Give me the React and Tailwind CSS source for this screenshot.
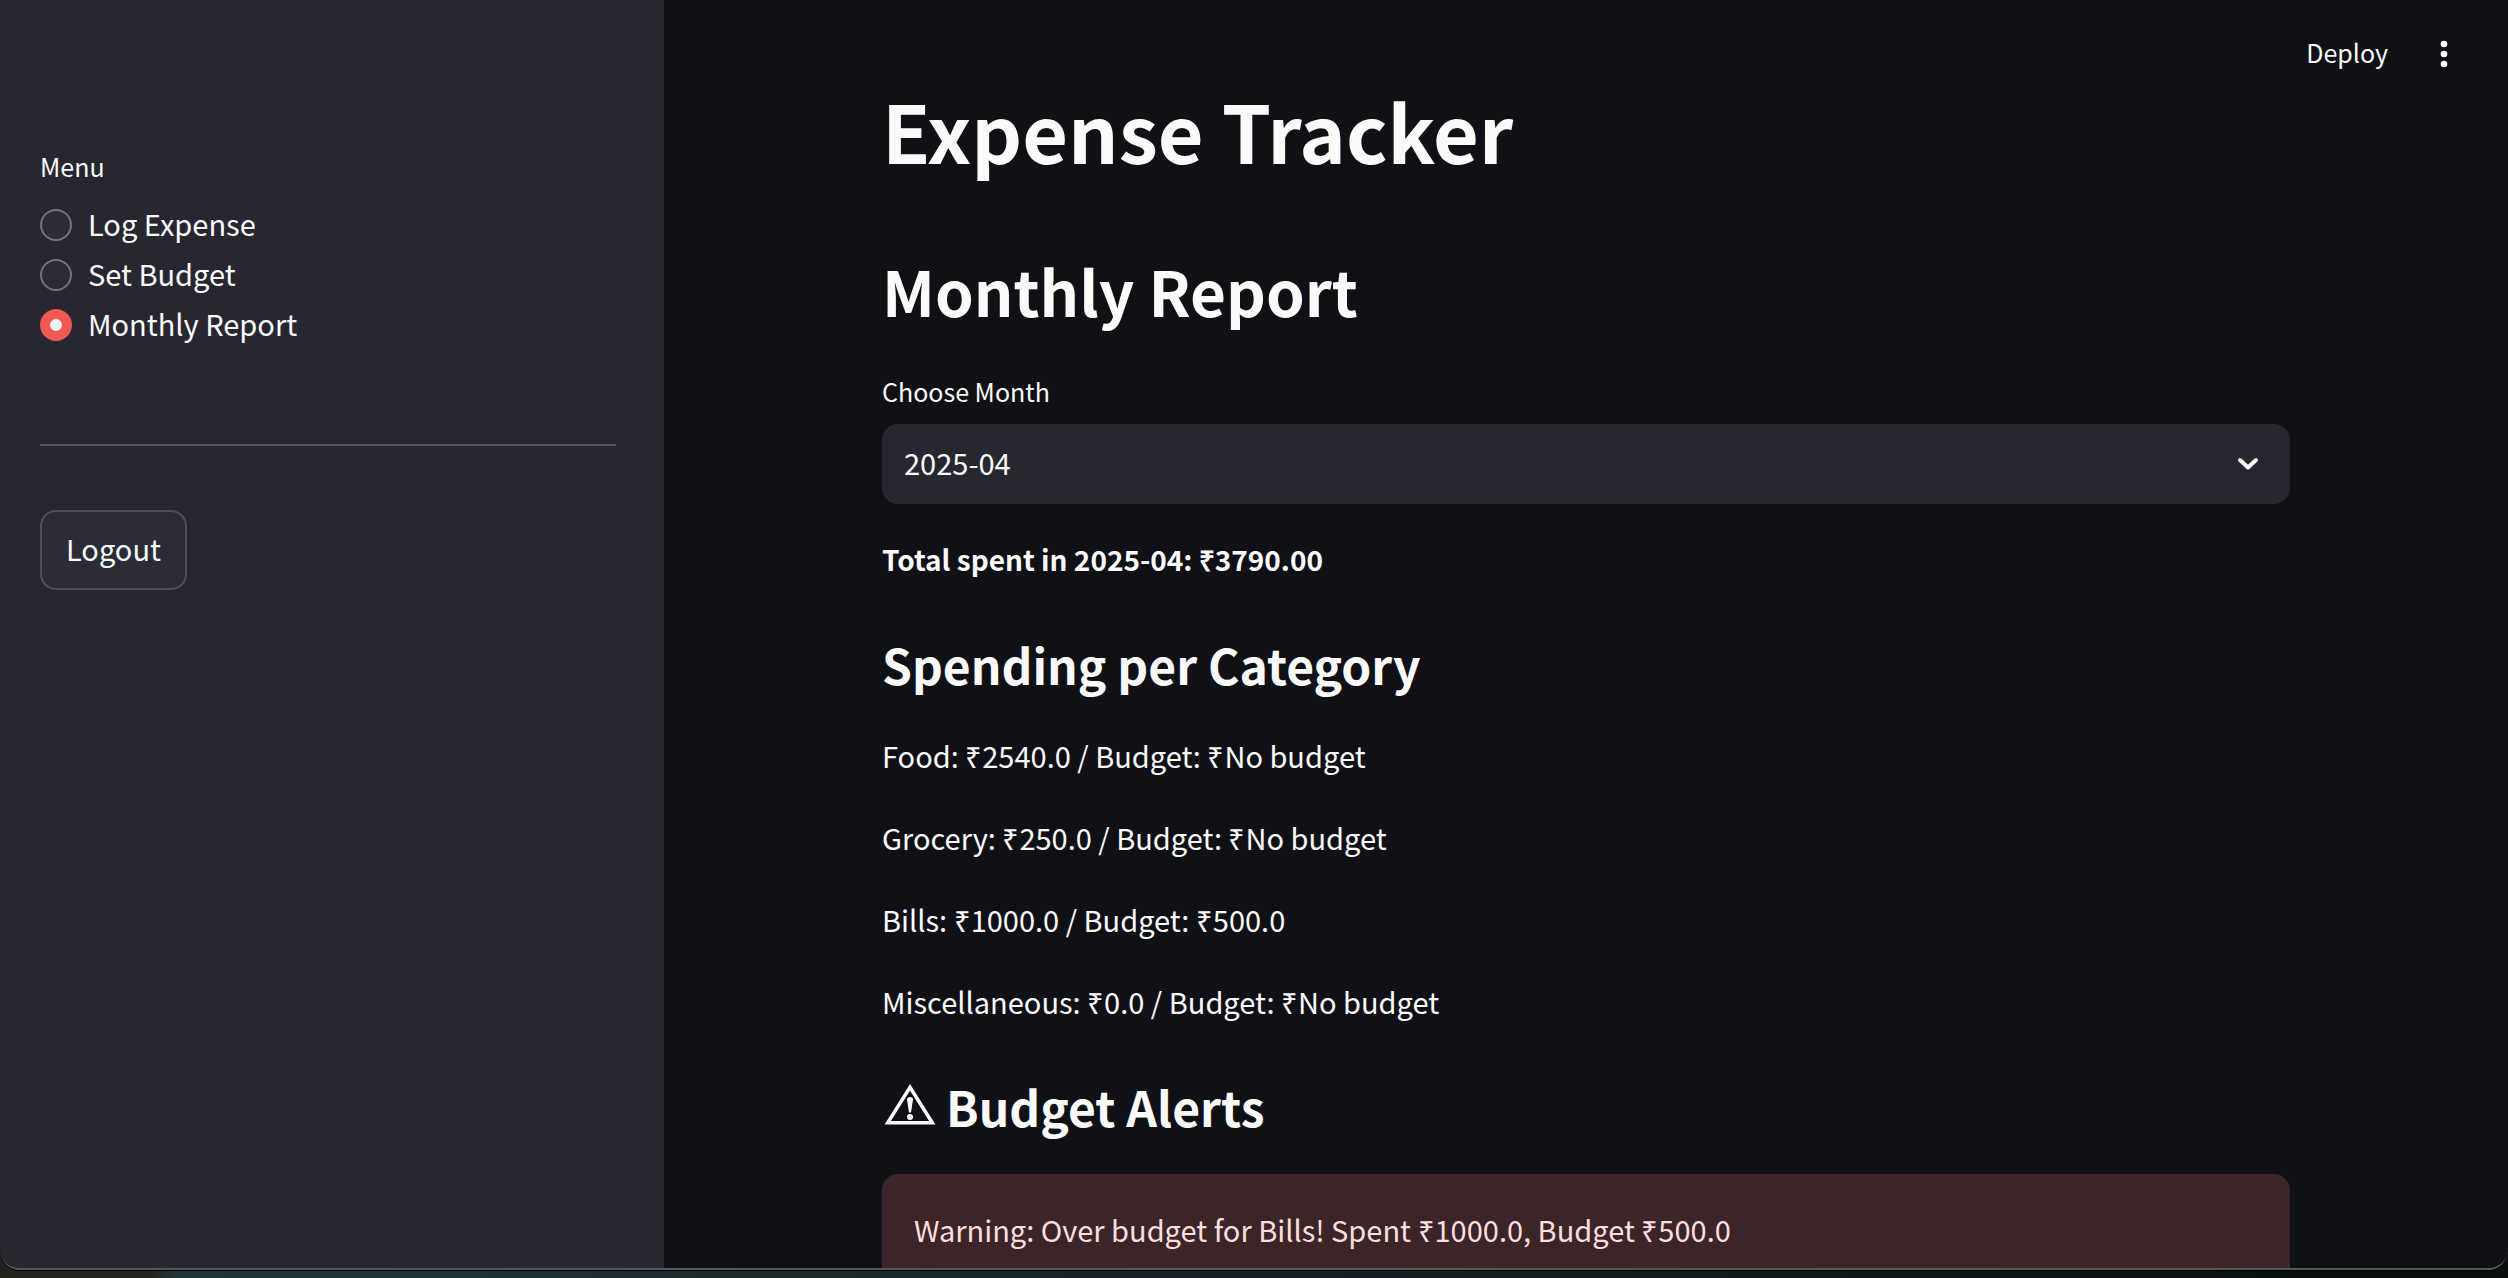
import { useState } from 'react';

const menuItems = ['Log Expense', 'Set Budget', 'Monthly Report'];

const categories = [
  { name: 'Food', spent: '2540.0', budget: 'No budget' },
  { name: 'Grocery', spent: '250.0', budget: 'No budget' },
  { name: 'Bills', spent: '1000.0', budget: '500.0' },
  { name: 'Miscellaneous', spent: '0.0', budget: 'No budget' },
];

function Sidebar() {
  const [selected, setSelected] = useState('Monthly Report');
  return (
    <aside className="w-[664px] shrink-0 bg-[#262730] pl-10 pr-12 pt-[146px]">
      <fieldset>
        <legend className="text-[25px] leading-10">Menu</legend>
        <div className="mt-[14px] flex flex-col">
          {menuItems.map((item) => (
            <label key={item} className="flex h-[50px] items-center gap-4">
              <input
                type="radio"
                name="menu"
                value={item}
                checked={selected === item}
                onChange={() => setSelected(item)}
                className="size-8 appearance-none rounded-full border-2 border-[#73747a] bg-[#2b2c36] checked:border-10 checked:border-[#ee5a53] checked:bg-[#f0f2f6]"
              />
              <span className="pb-1">{item}</span>
            </label>
          ))}
        </div>
      </fieldset>
      <hr className="mt-[94px] border-0 border-t-2 border-[#53545c]" />
      <button
        type="button"
        className="mt-16 h-20 rounded-2xl border-2 border-[#4f5059] bg-[#2b2c36] px-6 pb-1"
      >
        Logout
      </button>
    </aside>
  );
}

function Toolbar() {
  return (
    <header className="absolute top-0 right-0 flex items-center gap-9 pt-[34px] pr-11">
      <button type="button" className="pb-1 text-[25px] leading-9">
        Deploy
      </button>
      <button type="button" aria-label="Main menu">
        <svg width="40" height="40" viewBox="0 0 40 40" fill="currentColor">
          <circle cx="20" cy="10" r="3.3" />
          <circle cx="20" cy="20" r="3.3" />
          <circle cx="20" cy="30" r="3.3" />
        </svg>
      </button>
    </header>
  );
}

function WarningIcon() {
  return (
    <svg width="56" height="44" viewBox="0 0 56 44" fill="none" className="shrink-0">
      <path d="M28 3.3 L50.3 38.8 H5.7 Z" stroke="currentColor" strokeWidth="3.5" />
      <path d="M25 15.5 Q25 13 28 13 Q31 13 31 15.5 L29 28.5 H27 Z" fill="currentColor" />
      <circle cx="28" cy="33" r="3" fill="currentColor" />
    </svg>
  );
}

function Report() {
  return (
    <div className="mx-auto max-w-[1408px] pt-[77px]">
      <h1 className="text-[79px] leading-[106px] font-bold">Expense Tracker</h1>
      <h2 className="mt-16 text-[62px] leading-[86px] font-bold">Monthly Report</h2>

      <label htmlFor="month" className="mt-[38px] block text-[25px] leading-10">
        Choose Month
      </label>
      <div className="relative mt-[13px]">
        <select
          id="month"
          defaultValue="2025-04"
          className="block h-20 w-full appearance-none rounded-2xl bg-[#262730] px-[22px] pb-1"
        >
          <option>2025-04</option>
        </select>
        <svg
          className="pointer-events-none absolute top-5 right-[22px]"
          width="40"
          height="40"
          viewBox="0 0 40 40"
          fill="none"
          stroke="currentColor"
          strokeWidth="4"
          strokeLinecap="round"
          strokeLinejoin="round"
        >
          <path d="M12 16 L20 23.5 L28 16" />
        </svg>
      </div>

      <p className="mt-[30px] text-[28px] font-bold">Total spent in 2025-04: ₹3790.00</p>

      <h3 className="mt-[46px] text-[48px] leading-[68px] font-bold">Spending per Category</h3>
      <div className="mt-8 flex flex-col gap-8">
        {categories.map(({ name, spent, budget }) => (
          <p key={name}>
            {`${name}: ₹${spent} / Budget: ₹${budget}`}
          </p>
        ))}
      </div>

      <h3 className="mt-[46px] flex items-center gap-2 text-[48px] leading-[68px] font-bold">
        <WarningIcon />
        Budget Alerts
      </h3>
      <div role="alert" className="mt-[34px] rounded-2xl bg-[#3b2529] px-8 pt-[30px] pb-8 text-[#ffdede]">
        Warning: Over budget for Bills! Spent ₹1000.0, Budget ₹500.0
      </div>
    </div>
  );
}

export default function App() {
  return (
    <div className="h-screen overflow-hidden bg-linear-to-r from-[#22241b] from-6% via-[#20363c] via-7% to-[#0b1011] to-90% pb-2 font-['Noto_Sans_CJK_SC',sans-serif] text-[29px] leading-[50px] text-[#fafafa]">
      <div className="relative flex h-full overflow-hidden rounded-b-[20px] border-b-2 border-[#56575c] bg-[#101116] shadow-[0_1px_0_#000]">
        <Sidebar />
        <main className="min-w-0 flex-1">
          <Report />
        </main>
        <Toolbar />
      </div>
    </div>
  );
}
